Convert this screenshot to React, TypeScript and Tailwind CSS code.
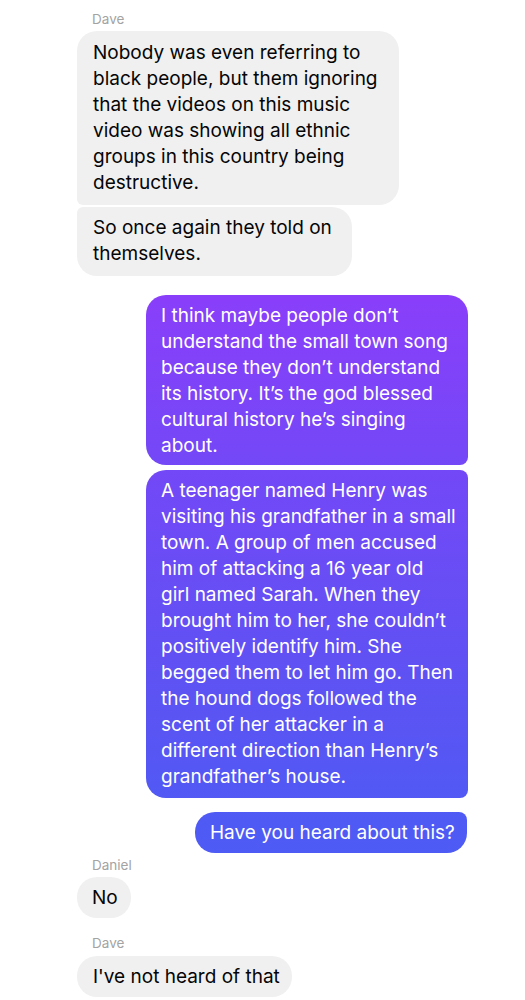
import React from "react";

const grad =
  "bg-[linear-gradient(180deg,#8e3efa_0%,#893ff9_30%,#7547f7_45%,#5e52f3_68%,#4f5af4_82%,#4a5ef6_100%)] bg-fixed";

function Lines({ lines }: { lines: string[] }) {
  return (
    <>
      {lines.map((l, i) => (
        <div key={i} className="whitespace-nowrap">
          {l}
        </div>
      ))}
    </>
  );
}

export default function App() {
  return (
    <div
      className="w-[525px] h-[1000px] bg-white overflow-hidden flex flex-col text-[19px] leading-[26px]"
      style={{ fontFamily: "Inter, 'Noto Sans', sans-serif" }}
    >
      <div className="mt-[11px] ml-[92px] h-[16px] text-[13.5px] leading-[16px] text-[#a3a3a3]">Dave</div>
      <div className="mt-[4px] ml-[77px] w-[322px] h-[174px] py-[9px] pl-[16px] bg-[#f0f0f0] text-[#050505] rounded-[20px] rounded-bl-[6px]">
        <Lines
          lines={[
            "Nobody was even referring to",
            "black people, but them ignoring",
            "that the videos on this music",
            "video was showing all ethnic",
            "groups in this country being",
            "destructive.",
          ]}
        />
      </div>
      <div className="mt-[2px] ml-[77px] w-[275px] h-[69px] pt-[8px] pl-[16px] bg-[#f0f0f0] text-[#050505] rounded-[20px] rounded-tl-[6px]">
        <Lines lines={["So once again they told on", "themselves."]} />
      </div>

      <div className={`mt-[19px] ml-[146px] w-[322px] h-[170px] pt-[8px] pl-[15px] text-white rounded-[20px] rounded-br-[8px] ${grad}`}>
        <Lines
          lines={[
            "I think maybe people don\u2019t",
            "understand the small town song",
            "because they don\u2019t understand",
            "its history. It\u2019s the god blessed",
            "cultural history he\u2019s singing",
            "about.",
          ]}
        />
      </div>
      <div className={`mt-[5px] ml-[146px] w-[322px] h-[328px] pt-[8px] pl-[15px] text-white rounded-[20px] rounded-tr-[8px] rounded-br-[8px] ${grad}`}>
        <Lines
          lines={[
            "A teenager named Henry was",
            "visiting his grandfather in a small",
            "town. A group of men accused",
            "him of attacking a 16 year old",
            "girl named Sarah. When they",
            "brought him to her, she couldn\u2019t",
            "positively identify him. She",
            "begged them to let him go. Then",
            "the hound dogs followed the",
            "scent of her attacker in a",
            "different direction than Henry\u2019s",
            "grandfather\u2019s house.",
          ]}
        />
      </div>
      <div className={`mt-[14px] ml-[195px] w-[272px] h-[41px] pl-[15px] flex items-center text-white rounded-[20px] rounded-tr-[8px] ${grad}`}>
        <span className="whitespace-nowrap">Have you heard about this?</span>
      </div>

      <div className="mt-[4px] ml-[92px] h-[16px] text-[13.5px] leading-[16px] text-[#a3a3a3]">Daniel</div>
      <div className="mt-[4px] ml-[77px] w-[54px] h-[41px] pl-[15px] flex items-center bg-[#f0f0f0] text-[#050505] rounded-[20px]">
        <span>No</span>
      </div>

      <div className="mt-[17px] ml-[92px] h-[16px] text-[13.5px] leading-[16px] text-[#a3a3a3]">Dave</div>
      <div className="mt-[5px] ml-[77px] w-[215px] h-[41px] pl-[16px] flex items-center bg-[#f0f0f0] text-[#050505] rounded-[20px]">
        <span className="whitespace-nowrap">I've not heard of that</span>
      </div>
    </div>
  );
}
